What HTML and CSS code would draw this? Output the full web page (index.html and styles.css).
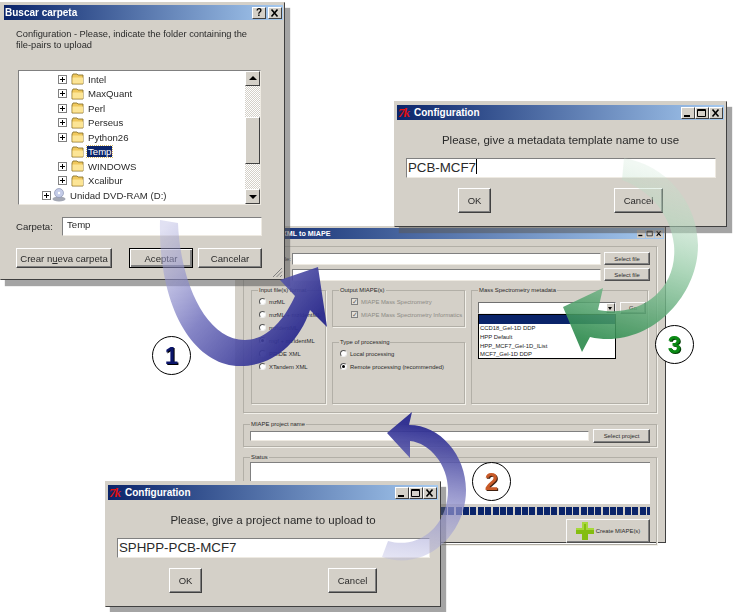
FILE: index.html
```
<!DOCTYPE html>
<html lang="en">
<head>
  <meta charset="UTF-8" />
  <title>Upload steps</title>
  <link rel="stylesheet" href="styles.css">
</head>
<body>

<svg class="sprites" width="0" height="0">
  <symbol id="min" viewBox="0 0 12 10"><rect x="2" y="7" width="6" height="2" fill="#000"/></symbol>
  <symbol id="max" viewBox="0 0 12 10"><path d="M1.500 1.500h8v7h-8z M1.500 2.500h8" fill="none" stroke="#000"/></symbol>
  <symbol id="close" viewBox="0 0 12 10"><path d="M2.500 1.500l6 7M8.500 1.500l-6 7" fill="none" stroke="#000" stroke-width="1.6"/></symbol>
  <symbol id="folder" viewBox="0 0 14 12">
    <path d="M1 3l1-2h4l1 1h5v9H1z" fill="#f0c85c" stroke="#8a7430" stroke-width=".9"/>
    <path d="M1.500 4.500h10.500v6H1.500z" fill="#fce596"/>
  </symbol>
</svg>

<div class="desktop">

  <!-- main window, behind the dialogs -->
  <div class="main-window">
    <div class="titlebar titlebar-small">
      <span class="main-title">XML to MIAPE</span>
      <span class="title-buttons">
        <span class="title-btn small"><svg><use href="#min"/></svg></span>
        <span class="title-btn small"><svg><use href="#max"/></svg></span>
        <span class="title-btn small"><svg><use href="#close"/></svg></span>
      </span>
    </div>

    <div class="main-body">
      <div class="group files-group">
        <div class="file-row">
          <span class="file-label">File:</span>
          <span class="field"></span>
          <span class="btn small-btn select-file">Select file</span>
        </div>
        <div class="file-row second">
          <span class="file-label"></span>
          <span class="field"></span>
          <span class="btn small-btn select-file">Select file</span>
        </div>

        <div class="columns">
          <div class="group input-format">
            <span class="legend">Input file(s) format</span>
            <div class="opt"><i class="radio"></i>mzML</div>
            <div class="opt"><i class="radio"></i>mzML + mzIdentML</div>
            <div class="opt"><i class="radio"></i>mzIdentML</div>
            <div class="opt"><i class="radio on"></i>mgf + mzIdentML</div>
            <div class="opt"><i class="radio"></i>PRIDE XML</div>
            <div class="opt"><i class="radio"></i>XTandem XML</div>
          </div>

          <div class="middle">
            <div class="group output-group">
              <span class="legend">Output MIAPE(s)</span>
              <div class="opt muted"><i class="check">✓</i>MIAPE Mass Spectrometry</div>
              <div class="opt muted"><i class="check">✓</i>MIAPE Mass Spectrometry Informatics</div>
            </div>
            <div class="group type-group">
              <span class="legend">Type of processing</span>
              <div class="opt"><i class="radio"></i>Local processing</div>
              <div class="opt"><i class="radio on"></i>Remote processing (recommended)</div>
            </div>
          </div>

          <div class="group ms-group">
            <span class="legend">Mass Spectrometry metadata</span>
            <div class="combo-row">
              <div class="combo">
                <span class="combo-arrow"></span>
                <div class="combo-list">
                  <div class="combo-item selected"></div>
                  <div class="combo-item">CCD18_Gel-1D DDP</div>
                  <div class="combo-item">HPP Default</div>
                  <div class="combo-item">HPP_MCF7_Gel-1D_IList</div>
                  <div class="combo-item">MCF7_Gel-1D DDP</div>
                </div>
              </div>
              <span class="btn small-btn go-btn">Go</span>
            </div>
          </div>
        </div>
      </div>

      <div class="group project-group">
        <span class="legend">MIAPE project name</span>
        <span class="field"></span>
        <span class="btn small-btn select-project">Select project</span>
      </div>

      <div class="group status-group">
        <span class="legend">Status</span>
        <div class="status-box"></div>
        <div class="progress"></div>
        <div class="create-row">
          <span class="btn small-btn create-btn">
            <svg width="18" height="18" viewBox="0 0 18 18"><path d="M6 0h6v6h6v6h-6v6H6v-6H0V6h6z" fill="#84bd10"/><path d="M6 0h6v6h6v2H10V2H8v6H0V6h6z" fill="#a6d83a"/></svg>
            <span>Create MIAPE(s)</span>
          </span>
        </div>
      </div>
    </div>
  </div>

  <!-- folder browser -->
  <div class="dialog folder-dialog">
    <div class="titlebar">
      <span class="title-text">Buscar carpeta</span>
      <span class="title-buttons">
        <span class="title-btn help">?</span>
        <span class="title-btn"><svg><use href="#close"/></svg></span>
      </span>
    </div>
    <p class="folder-prompt">Configuration - Please, indicate the folder containing the<br>file-pairs to upload</p>

    <div class="tree">
      <div class="tree-rows">
        <div class="tree-row"><i class="expander"></i><svg class="folder"><use href="#folder"/></svg><span>Intel</span></div>
        <div class="tree-row"><i class="expander"></i><svg class="folder"><use href="#folder"/></svg><span>MaxQuant</span></div>
        <div class="tree-row"><i class="expander"></i><svg class="folder"><use href="#folder"/></svg><span>Perl</span></div>
        <div class="tree-row"><i class="expander"></i><svg class="folder"><use href="#folder"/></svg><span>Perseus</span></div>
        <div class="tree-row"><i class="expander"></i><svg class="folder"><use href="#folder"/></svg><span>Python26</span></div>
        <div class="tree-row"><i class="expander blank"></i><svg class="folder"><use href="#folder"/></svg><span class="tree-selected">Temp</span></div>
        <div class="tree-row"><i class="expander"></i><svg class="folder"><use href="#folder"/></svg><span>WINDOWS</span></div>
        <div class="tree-row"><i class="expander"></i><svg class="folder"><use href="#folder"/></svg><span>Xcalibur</span></div>
        <div class="tree-row drive"><i class="expander"></i>
          <svg class="drive-icon" width="14" height="14" viewBox="0 0 14 14"><ellipse cx="7" cy="11" rx="6.500" ry="2.500" fill="#a4a8b4"/><circle cx="7" cy="5" r="4.500" fill="#c4cce8" stroke="#8088a8" stroke-width=".6"/><circle cx="7" cy="5" r="1.200" fill="#fff"/></svg>
          <span>Unidad DVD-RAM (D:)</span></div>
      </div>
      <div class="scrollbar">
        <span class="scroll-btn up"></span>
        <span class="scroll-gap top"></span>
        <span class="scroll-thumb"></span>
        <span class="scroll-gap"></span>
        <span class="scroll-btn down"></span>
      </div>
    </div>

    <div class="folder-field">
      <label>Carpeta:</label>
      <span class="field folder-input">Temp</span>
    </div>

    <div class="folder-actions">
      <span class="btn new-folder"><span>Crear n<u>u</u>eva carpeta</span></span>
      <span class="btn default-btn accept">Aceptar</span>
      <span class="btn cancel">Cancelar</span>
    </div>
    <svg class="grip" width="11" height="11" viewBox="0 0 11 11"><path d="M10 1L1 10M10 4.500L4.500 10M10 8L8 10" stroke="#808080" fill="none"/></svg>
  </div>

  <!-- metadata template name -->
  <div class="dialog config config-template">
    <div class="titlebar">
      <span class="tk-logo">7k</span>
      <span class="title-text">Configuration</span>
      <span class="title-buttons">
        <span class="title-btn"><svg><use href="#min"/></svg></span>
        <span class="title-btn"><svg><use href="#max"/></svg></span>
        <span class="title-btn"><svg><use href="#close"/></svg></span>
      </span>
    </div>
    <p class="config-prompt">Please, give a metadata template name to use</p>
    <div class="field config-input">PCB-MCF7<i class="caret"></i></div>
    <div class="config-actions">
      <span class="btn ok-btn">OK</span>
      <span class="btn cancel-btn">Cancel</span>
    </div>
  </div>

  <!-- project name -->
  <div class="dialog config config-project">
    <div class="titlebar">
      <span class="tk-logo">7k</span>
      <span class="title-text">Configuration</span>
      <span class="title-buttons">
        <span class="title-btn"><svg><use href="#min"/></svg></span>
        <span class="title-btn"><svg><use href="#max"/></svg></span>
        <span class="title-btn"><svg><use href="#close"/></svg></span>
      </span>
    </div>
    <p class="config-prompt">Please, give a project name to upload to</p>
    <div class="field config-input">SPHPP-PCB-MCF7</div>
    <div class="config-actions">
      <span class="btn ok-btn">OK</span>
      <span class="btn cancel-btn">Cancel</span>
    </div>
  </div>

  <!-- arrows drawn over everything -->
  <svg class="arrows" width="734" height="612" viewBox="0 0 734 612">
    <defs>
      <linearGradient id="blue1" gradientUnits="userSpaceOnUse" x1="165" y1="225" x2="300" y2="340">
        <stop offset="0" stop-color="#b4b4e0" stop-opacity=".4"/>
        <stop offset=".5" stop-color="#7070bc" stop-opacity=".85"/>
        <stop offset="1" stop-color="#28288c" stop-opacity=".95"/>
      </linearGradient>
      <linearGradient id="blue2" gradientUnits="userSpaceOnUse" x1="400" y1="560" x2="420" y2="425">
        <stop offset="0" stop-color="#b4b4e0" stop-opacity=".35"/>
        <stop offset=".55" stop-color="#8484c4" stop-opacity=".85"/>
        <stop offset="1" stop-color="#2a2a90" stop-opacity=".95"/>
      </linearGradient>
      <linearGradient id="green3" gradientUnits="userSpaceOnUse" x1="640" y1="165" x2="590" y2="340">
        <stop offset="0" stop-color="#c8e4d0" stop-opacity=".25"/>
        <stop offset=".5" stop-color="#98cca8" stop-opacity=".8"/>
        <stop offset="1" stop-color="#2c8a4c" stop-opacity=".9"/>
      </linearGradient>
    </defs>
    <path fill="url(#blue1)" d="M160 220L178 223C180 280 205 340 245 340C268 340 285 318 295 296L280 280L318 267L327 327L310 310C298 345 272 366 240 366C195 366 158 310 160 220Z"/>
    <path fill="url(#blue2)" d="M387 433L412 412L409 425C440 425 466 455 466 490C466 535 425 572 382 557L388 541C420 550 448 525 448 490C448 465 430 443 410 441L410 458Z"/>
    <path fill="url(#green3)" d="M563 307L603 288L598 310C640 318 678 290 674 245C671 215 650 190 622 180L624 158C665 165 697 200 698 245C698 300 645 350 590 337L582 352Z"/>
  </svg>

  <div class="step step-one">1</div>
  <div class="step step-two">2</div>
  <div class="step step-three">3</div>
</div>

</body>
</html>
```

FILE: styles.css
```
* {
  box-sizing: border-box;
}

body {
  margin: 0;
  background: white;
  font-family: "Liberation Sans", Arial, sans-serif;
  color: #2a2a2a;
}

.sprites {
  position: absolute;
}

.desktop {
  position: relative;
  width: 734px;
  height: 612px;
  overflow: hidden;
  filter: blur(0.4px);
}

/* shared window pieces */
.dialog,
.main-window {
  position: absolute;
  background: #d4d0c8;
  border: 1px solid #404040;
  border-top-color: #d4d0c8;
  border-left-color: #d4d0c8;
}

.dialog {
  box-shadow: 5px 6px 1px rgba(90, 90, 90, 0.55);
  padding: 2px;
}

.titlebar {
  display: flex;
  align-items: center;
  height: 15px;
  padding: 0 1px;
  background: linear-gradient(to right, #0a246a, #a6caf0);
  color: white;
  font-weight: bold;
  font-size: 10px;
}

.title-text {
  flex: 1;
}

.title-buttons {
  display: flex;
}

.title-btn {
  width: 14px;
  height: 12px;
  background: #d4d0c8;
  border: 1px solid;
  border-color: #fff #404040 #404040 #fff;
  color: #000;
  font-size: 10px;
  line-height: 10px;
  text-align: center;
}

.title-btn svg {
  display: block;
  width: 12px;
  height: 10px;
}

.title-btn.help {
  margin-right: 2px;
}

.field {
  display: block;
  background: white;
  border-top: 1px solid #808080;
  border-left: 1px solid #808080;
  border-bottom: 1px solid #eeeae2;
  border-right: 1px solid #eeeae2;
}

.btn {
  display: flex;
  align-items: center;
  justify-content: center;
  background: #d4d0c8;
  border: 1px solid;
  border-color: #fff #404040 #404040 #fff;
  box-shadow: inset -1px -1px 0 #808080;
}

/* folder browser */
.folder-dialog {
  left: 0;
  top: 2px;
  width: 285px;
  height: 278px;
  padding: 2px 1px 0 3px;
  font-size: 9.6px;
}

.folder-prompt {
  margin: 9px 0 0 12px;
  font-size: 9.3px;
  line-height: 11px;
  height: 24px;
}

.tree {
  display: flex;
  height: 135px;
  margin: 17px 22px 0 14px;
  background: white;
  border: 1px solid #808080;
  border-color: #808080 #eeeae2 #eeeae2 #808080;
}

.tree-rows {
  flex: 1;
  padding-top: 1px;
}

.tree-row {
  display: flex;
  align-items: center;
  height: 14.5px;
  padding-left: 39px;
}

.tree-row.drive {
  padding-left: 23px;
}

.expander {
  position: relative;
  width: 9px;
  height: 9px;
  margin-right: 4px;
  border: 1px solid #808080;
  background: white;
  flex-shrink: 0;
}

.expander::before {
  content: "";
  position: absolute;
  left: 1px;
  top: 3px;
  width: 5px;
  height: 1px;
  background: #000;
}

.expander::after {
  content: "";
  position: absolute;
  left: 3px;
  top: 1px;
  width: 1px;
  height: 5px;
  background: #000;
}

.expander.blank {
  visibility: hidden;
}

.folder {
  width: 14px;
  height: 12px;
  margin-right: 3px;
  flex-shrink: 0;
}

.drive-icon {
  margin-right: 4px;
  margin-left: -3px;
  flex-shrink: 0;
}

.tree-selected {
  background: #0a246a;
  color: white;
  outline: 1px dotted #d8b860;
  padding: 0 1px;
  margin-left: -1px;
}

.scrollbar {
  display: flex;
  flex-direction: column;
  width: 15px;
  background: repeating-conic-gradient(#d4d0c8 0 25%, #fff 0 50%) 0 0 / 2px 2px;
}

.scroll-btn {
  position: relative;
  height: 15px;
  background: #d4d0c8;
  border: 1px solid;
  border-color: #fff #404040 #404040 #fff;
}

.scroll-btn::after {
  content: "";
  position: absolute;
  left: 3px;
  border-left: 4px solid transparent;
  border-right: 4px solid transparent;
}

.scroll-btn.up::after {
  top: 4px;
  border-bottom: 4px solid #000;
}

.scroll-btn.down::after {
  top: 5px;
  border-top: 4px solid #000;
}

.scroll-gap {
  flex: 1;
}

.scroll-gap.top {
  flex: 0 0 31px;
}

.scroll-thumb {
  height: 47px;
  background: #d4d0c8;
  border: 1px solid;
  border-color: #fff #404040 #404040 #fff;
}

.folder-field {
  display: flex;
  align-items: center;
  margin: 12px 21px 0 12px;
}

.folder-field label {
  width: 46px;
}

.folder-input {
  flex: 1;
  height: 19px;
  padding-left: 4px;
  line-height: 14px;
}

.folder-actions {
  display: flex;
  height: 20px;
  margin: 12px 21px 0 12px;
}

.new-folder {
  width: 96px;
}

.accept {
  width: 64px;
  margin-left: 17px;
}

.default-btn {
  border-color: #000;
  box-shadow: inset 1px 1px 0 #fff, inset -2px -2px 0 #808080;
}

.cancel {
  width: 64px;
  margin-left: 5px;
}

.grip {
  position: absolute;
  right: 1px;
  bottom: 1px;
}

/* Configuration dialogs */
.config {
  padding: 3px 2px 0;
}

.config-template {
  left: 394px;
  top: 101px;
  width: 333px;
  height: 126px;
}

.config-project {
  left: 105px;
  top: 481px;
  width: 336px;
  height: 126px;
}

.tk-logo {
  width: 16px;
  color: #e01010;
  font-family: "Liberation Serif", serif;
  font-style: italic;
  font-size: 13px;
  letter-spacing: -1px;
}

.config-prompt {
  margin: 13px 0 0;
  height: 14px;
  line-height: 14px;
  text-align: center;
  font-size: 11.5px;
}

.config-input {
  position: relative;
  height: 20px;
  margin: 11px 8px 0 9px;
  padding-left: 1px;
  font-size: 13.3px;
  line-height: 18px;
  white-space: nowrap;
}

.caret {
  display: inline-block;
  width: 1px;
  height: 15px;
  background: #000;
  vertical-align: -2px;
}

.config-actions {
  display: flex;
  justify-content: space-between;
  margin: 10px 61px 0 61px;
  font-size: 9.5px;
}

.ok-btn {
  width: 33px;
  height: 25px;
}

.cancel-btn {
  width: 49px;
  height: 25px;
}

/* main window */
.main-window {
  left: 235px;
  top: 226px;
  width: 431px;
  height: 317px;
  padding: 1px 1px 0;
  font-size: 5.9px;
  color: #2a2a2a;
}

.titlebar-small {
  height: 11px;
  font-size: 7.2px;
  padding-left: 45px;
}

.main-title {
  flex: 1;
}

.title-btn.small {
  width: 8px;
  height: 8px;
  border-width: 0;
  background: #cfcbc4;
  margin-left: 1px;
}

.title-btn.small svg {
  width: 8px;
  height: 7px;
}

.main-body {
  display: flex;
  flex-direction: column;
  gap: 10px;
  padding: 7px 7px 0 6px;
}

.group {
  position: relative;
  border: 1px solid #b2afa7;
  box-shadow: 1px 1px 0 #f2f0ea;
}

.legend {
  position: absolute;
  left: 6px;
  top: -5px;
  padding: 0 1px;
  background: #d4d0c8;
  line-height: 9px;
}

.small-btn {
  border-color: #fafafa #505050 #505050 #fafafa;
}

.files-group {
  height: 167px;
  padding: 5px 6px 0 7px;
}

.file-row {
  display: flex;
  align-items: center;
  height: 13px;
}

.file-row.second {
  margin-top: 3px;
}

.file-label {
  width: 41px;
  text-align: right;
  padding-right: 1px;
}

.file-row .field {
  flex: 1;
  height: 12px;
}

.select-file {
  width: 46px;
  height: 13px;
  margin-left: 3px;
}

.columns {
  display: flex;
  gap: 6px;
  margin-top: 9px;
  height: 114px;
}

.input-format {
  width: 75px;
  padding: 4px 0 0 7px;
}

.middle {
  display: flex;
  flex-direction: column;
  justify-content: space-between;
  width: 133px;
}

.output-group {
  height: 37px;
  padding: 4px 0 0 18px;
}

.type-group {
  height: 62px;
  padding: 4px 0 0 7px;
}

.ms-group {
  width: 177px;
}

.opt {
  display: flex;
  align-items: center;
  gap: 3px;
  height: 13px;
  white-space: nowrap;
}

.opt.muted {
  color: #8c8a84;
}

.radio {
  position: relative;
  width: 7px;
  height: 7px;
  border-radius: 50%;
  background: white;
  border: 1px solid #555;
  border-right-color: #eee;
  border-bottom-color: #eee;
  flex-shrink: 0;
}

.radio.on::after {
  content: "";
  position: absolute;
  left: 1px;
  top: 1px;
  width: 3px;
  height: 3px;
  border-radius: 50%;
  background: #000;
}

.check {
  width: 7px;
  height: 7px;
  border: 1px solid #808080;
  background: #e4e1da;
  font-style: normal;
  font-size: 7px;
  line-height: 5px;
  color: #666;
  flex-shrink: 0;
}

.combo-row {
  display: flex;
  gap: 4px;
  padding: 11px 0 0 6px;
}

.combo {
  position: relative;
  width: 138px;
  height: 12px;
  background: white;
  border: 1px solid #707070;
  border-right-color: #eee;
  border-bottom-color: #eee;
}

.combo-arrow {
  position: absolute;
  right: 0;
  top: 0;
  width: 9px;
  height: 10px;
  background: #d4d0c8;
  border: 1px solid;
  border-color: #fff #404040 #404040 #fff;
}

.combo-arrow::after {
  content: "";
  position: absolute;
  left: 1px;
  top: 3px;
  border-left: 2.5px solid transparent;
  border-right: 2.5px solid transparent;
  border-top: 3px solid #000;
}

.combo-list {
  position: absolute;
  left: -1px;
  top: 11px;
  width: 138px;
  height: 45px;
  background: white;
  border: 1px solid #000;
  color: #222;
}

.combo-item {
  height: 8.8px;
  line-height: 8.8px;
  padding-left: 1px;
  white-space: nowrap;
}

.combo-item.selected {
  height: 9px;
  background: #0a246a;
}

.go-btn {
  width: 26px;
  height: 12px;
}

.project-group {
  display: flex;
  align-items: center;
  gap: 4px;
  height: 23px;
  margin-top: 1px;
  padding: 0 6px;
}

.project-group .field {
  flex: 1;
  height: 10px;
}

.select-project {
  width: 57px;
  height: 14px;
}

.status-group {
  height: 88px;
  padding: 4px 6px 0;
}

.status-box {
  height: 42px;
  background: white;
  border-top: 1px solid #808080;
  border-left: 1px solid #808080;
}

.progress {
  height: 8px;
  margin-top: 3px;
  background: repeating-linear-gradient(to right, #0a246a 0 6px, #d4d0c8 6px 7.35px);
}

.create-row {
  display: flex;
  justify-content: flex-end;
  margin-top: 4px;
}

.create-btn {
  gap: 2px;
  width: 84px;
  height: 24px;
}

/* overlay */
.arrows {
  position: absolute;
  left: 0;
  top: 0;
  pointer-events: none;
}

.step {
  position: absolute;
  width: 39px;
  height: 39px;
  border: 1px solid #000;
  border-radius: 50%;
  background: white;
  font-size: 24px;
  font-weight: bold;
  line-height: 37px;
  text-align: center;
}

.step-one {
  left: 152px;
  top: 336px;
  color: #0a146a;
  text-shadow: 1px 1px 0 #000;
}

.step-two {
  left: 472px;
  top: 462px;
  color: #c85a28;
  text-shadow: 1px 1px 0 #402010;
}

.step-three {
  left: 655px;
  top: 325px;
  color: #0a8a14;
  text-shadow: 1px 1px 0 #044008;
}
```
